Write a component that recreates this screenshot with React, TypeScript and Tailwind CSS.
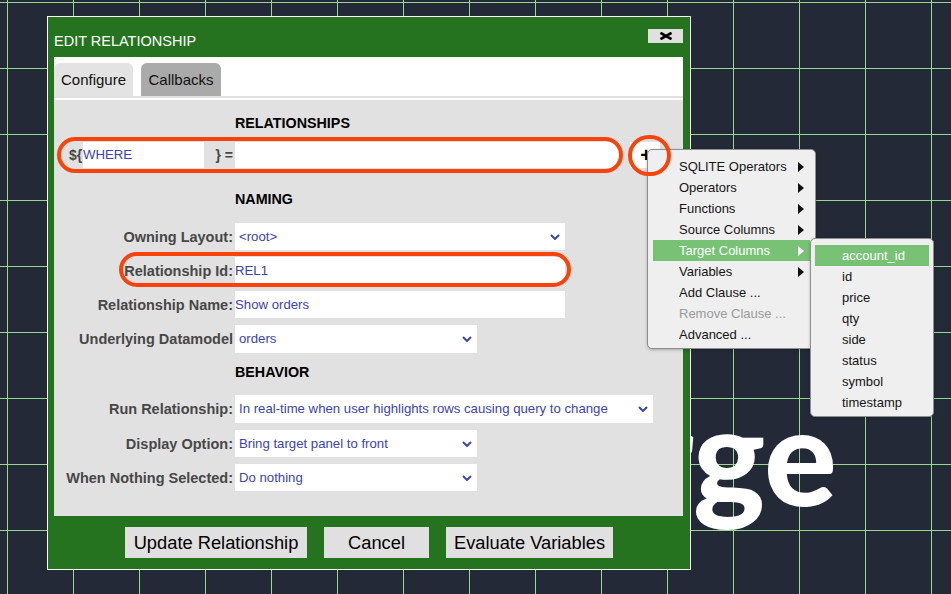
import React from "react";

const BLUE = "text-[#3b45a8]";

function Chevron() {
  return (
    <svg width="10" height="6" viewBox="0 0 10 6" className="absolute right-[5px] top-1/2 -translate-y-1/2">
      <path d="M1 1 L5 5 L9 1" stroke="#3b45a8" strokeWidth="2" fill="none" />
    </svg>
  );
}

function Arrow({ white }: { white?: boolean }) {
  return (
    <svg width="6" height="10" viewBox="0 0 6 10" className="absolute right-[6px] top-1/2 -translate-y-1/2">
      <polygon points="0,0 6,5 0,10" fill={white ? "#ffffff" : "#111111"} />
    </svg>
  );
}

function Label({ children }: { children: React.ReactNode }) {
  return (
    <div className="w-[181px] shrink-0 text-right pr-[2px] text-[14.5px] font-bold text-[#474747] leading-4">
      {children}
    </div>
  );
}

const menuItems: { t: string; arrow?: boolean; active?: boolean; disabled?: boolean }[] = [
  { t: "SQLITE Operators", arrow: true },
  { t: "Operators", arrow: true },
  { t: "Functions", arrow: true },
  { t: "Source Columns", arrow: true },
  { t: "Target Columns", arrow: true, active: true },
  { t: "Variables", arrow: true },
  { t: "Add Clause ..." },
  { t: "Remove Clause ...", disabled: true },
  { t: "Advanced ..." },
];

const subItems = ["account_id", "id", "price", "qty", "side", "status", "symbol", "timestamp"];

export default function App() {
  return (
    <div
      className="relative w-[951px] h-[594px] overflow-hidden bg-[#232937] bg-[linear-gradient(to_right,#98d992_1px,transparent_1px),linear-gradient(to_bottom,#98d992_1px,transparent_1px)] [background-size:66px_66px] [background-position:7px_2px]"
      style={{ fontFamily: '"Liberation Sans", Arial, sans-serif' }}
    >
      {/* background word */}
      <div
        className="absolute right-[114px] top-[386px] text-[136px] font-black leading-none text-white"
        style={{ fontFamily: 'Lato, sans-serif' }}
      >
        rge
      </div>

      {/* dialog */}
      <div className="absolute left-[47px] top-[16px] w-[644px] h-[554px] border border-white bg-[#25731f] flex flex-col">
        {/* title bar */}
        <div className="h-[40px] shrink-0 flex justify-between items-start pl-[6px] pr-[7px]">
          <div className="mt-[16px] text-[14.5px] leading-[17px] text-white">EDIT RELATIONSHIP</div>
          <div className="mt-[12px] w-[35px] h-[14px] bg-[#e0e0e0] flex items-center justify-center">
            <svg width="14" height="8" viewBox="0 0 14 8">
              <path d="M1.5 0.8 L12.5 7.2 M12.5 0.8 L1.5 7.2" stroke="#000" strokeWidth="2.6" />
            </svg>
          </div>
        </div>

        {/* panel */}
        <div className="ml-[6px] w-[629px] bg-white flex flex-col">
          <div className="pt-[6px] flex gap-[8px] h-[39px]">
            <div className="w-[79px] h-[33px] pt-[2px] rounded-t-[6px] bg-[#e3e3e3] flex items-center justify-center text-[15px] text-[#111]">
              Configure
            </div>
            <div className="w-[80px] h-[33px] pt-[2px] rounded-t-[6px] bg-[#aaaaaa] flex items-center justify-center text-[15px] text-[#111]">
              Callbacks
            </div>
          </div>
          <div className="h-[2px] bg-[#e0e0e0]" />
          <div className="h-[2px] bg-white" />

          {/* content */}
          <div className="h-[416px] bg-[#e1e1e1] flex flex-col">
            <div className="mt-[15px] pl-[181px] text-[14.3px] font-bold leading-4 text-black">RELATIONSHIPS</div>

            <div className="mt-[11px] h-[26px] flex items-center pl-[15px]">
              <span className="w-[14px] text-[14px] font-bold text-[#474747]">{"${"}</span>
              <div className={`w-[121px] h-full bg-white flex items-center text-[13.2px] ${BLUE}`}>WHERE</div>
              <span className="w-[31px] text-right pr-[2px] text-[14px] font-bold text-[#474747]">{"} ="}</span>
              <div className="w-[385px] h-full bg-white" />
              <div className="ml-[10px] w-[30px] h-full bg-white flex items-center justify-center text-[20px] font-bold text-black leading-none pl-[2px]">
                +
              </div>
            </div>

            <div className="mt-[23px] pl-[181px] text-[14.3px] font-bold leading-4 text-black">NAMING</div>

            <div className="mt-[16px] h-[27px] flex items-center">
              <Label>Owning Layout:</Label>
              <div className={`relative w-[330px] h-full bg-white flex items-center pl-[4px] text-[13.2px] ${BLUE}`}>
                {"<root>"}
                <Chevron />
              </div>
            </div>
            <div className="mt-[7px] h-[27px] flex items-center">
              <Label>Relationship Id:</Label>
              <div className={`w-[330px] h-full bg-white flex items-center text-[13.2px] ${BLUE}`}>REL1</div>
            </div>
            <div className="mt-[7px] h-[27px] flex items-center">
              <Label>Relationship Name:</Label>
              <div className={`w-[330px] h-full bg-white flex items-center text-[13.2px] ${BLUE}`}>Show orders</div>
            </div>
            <div className="mt-[7px] h-[28px] flex items-center">
              <Label>Underlying Datamodel</Label>
              <div className={`relative w-[242px] h-full bg-white flex items-center pl-[4px] text-[13.2px] ${BLUE}`}>
                orders
                <Chevron />
              </div>
            </div>

            <div className="mt-[11px] pl-[181px] text-[14.3px] font-bold leading-4 text-black">BEHAVIOR</div>

            <div className="mt-[15px] h-[28px] flex items-center">
              <Label>Run Relationship:</Label>
              <div className={`relative w-[418px] h-full bg-white flex items-center pl-[4px] text-[13.2px] ${BLUE}`}>
                In real-time when user highlights rows causing query to change
                <Chevron />
              </div>
            </div>
            <div className="mt-[7px] h-[27px] flex items-center">
              <Label>Display Option:</Label>
              <div className={`relative w-[242px] h-full bg-white flex items-center pl-[4px] text-[13.2px] ${BLUE}`}>
                Bring target panel to front
                <Chevron />
              </div>
            </div>
            <div className="mt-[7px] h-[27px] flex items-center">
              <Label>When Nothing Selected:</Label>
              <div className={`relative w-[242px] h-full bg-white flex items-center pl-[4px] text-[13.2px] ${BLUE}`}>
                Do nothing
                <Chevron />
              </div>
            </div>
          </div>
        </div>

        {/* footer */}
        <div className="mt-[11px] flex justify-center gap-[17px]">
          <div className="w-[182px] h-[31px] bg-[#e0e0e0] flex items-center justify-center text-[18.3px] text-black">
            Update Relationship
          </div>
          <div className="w-[105px] h-[31px] bg-[#e0e0e0] flex items-center justify-center text-[18.3px] text-black">
            Cancel
          </div>
          <div className="w-[167px] h-[31px] bg-[#e0e0e0] flex items-center justify-center text-[18.3px] text-black">
            Evaluate Variables
          </div>
        </div>
      </div>

      {/* context menu */}
      <div className="absolute left-[647px] top-[149px] w-[169px] h-[200px] bg-[#efefef] border border-[#8e8e8e] rounded-[5px] pt-[6px] px-[5px] shadow-[0_1px_3px_rgba(0,0,0,0.25)]">
        {menuItems.map((m) => (
          <div
            key={m.t}
            className={`relative h-[21px] flex items-center pl-[26px] text-[13px] ${
              m.active ? "bg-[#78c276] text-white" : m.disabled ? "text-[#9a9a9a]" : "text-[#151515]"
            }`}
          >
            {m.t}
            {m.arrow && <Arrow white={m.active} />}
          </div>
        ))}
      </div>

      {/* submenu */}
      <div className="absolute left-[810px] top-[238px] w-[124px] h-[179px] bg-[#efefef] border border-[#8e8e8e] rounded-[5px] pt-[6px] px-[4px] shadow-[0_1px_3px_rgba(0,0,0,0.25)]">
        {subItems.map((s, i) => (
          <div
            key={s}
            className={`h-[21px] flex items-center pl-[27px] text-[13px] ${
              i === 0 ? "bg-[#78c276] text-white" : "text-[#151515]"
            }`}
          >
            {s}
          </div>
        ))}
      </div>

      {/* annotation ovals */}
      <div className="absolute left-[57px] top-[137px] w-[566px] h-[36px] rounded-full border-[4px] border-[#fa430a]" />
      <div className="absolute left-[628px] top-[135px] w-[43px] h-[41px] rounded-full border-[4px] border-[#fa430a]" />
      <div className="absolute left-[119px] top-[252px] w-[452px] h-[35px] rounded-full border-[4px] border-[#fa430a]" />
    </div>
  );
}
